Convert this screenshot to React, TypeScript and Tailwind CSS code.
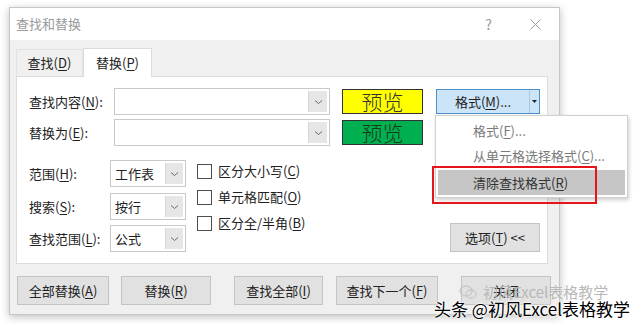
import React from "react";

const font = { fontFamily: '"Noto Sans CJK SC", "Noto Sans", sans-serif' };

function U({ children }: { children: React.ReactNode }) {
  return <span className="underline underline-offset-2 decoration-1">{children}</span>;
}

function Chevron() {
  return (
    <svg width="9" height="6" viewBox="0 0 9 6" className="text-[#6b6b6b]">
      <path d="M1 1.5 L4.5 4.5 L8 1.5" fill="none" stroke="currentColor" strokeWidth="1" />
    </svg>
  );
}

function Combo({ width }: { width: string }) {
  return (
    <div className={`flex h-[27px] ${width} border border-[#c9c9c9] bg-white`}>
      <div className="flex-1" />
      <div className="flex w-[19px] items-center justify-center border-l border-[#d6d6d6] bg-[#e6e6e6] m-[2px] ml-0">
        <Chevron />
      </div>
    </div>
  );
}

function Select({ value }: { value: string }) {
  return (
    <div className="flex h-[27px] w-[76px] border border-[#c9c9c9] bg-white">
      <div className="flex flex-1 items-center pl-[4px] text-[13px] text-[#222]">{value}</div>
      <div className="m-[2px] ml-0 flex w-[18px] items-center justify-center border-l border-[#d6d6d6] bg-[#e6e6e6]">
        <Chevron />
      </div>
    </div>
  );
}

function Check({ children }: { children: React.ReactNode }) {
  return (
    <div className="flex h-[26px] items-center gap-[6px] text-[13px] text-[#222]">
      <div className="h-[15px] w-[15px] border border-[#4d4d4d] bg-white" />
      <span>{children}</span>
    </div>
  );
}

function Btn({ w, children }: { w: string; children: React.ReactNode }) {
  return (
    <div
      className={`flex h-[29px] ${w} items-center justify-center border border-[#c4c4c4] bg-[#e1e1e1] text-[13px] text-[#222]`}
    >
      {children}
    </div>
  );
}

export default function App() {
  return (
    <div className="relative h-[324px] w-[640px] overflow-hidden bg-white pl-[9px] pt-[7px]" style={font}>
      <div className="flex h-[308px] w-[551px] flex-col border border-[#c6c6c6] shadow-[0_2px_8px_rgba(0,0,0,0.25)]">
        <div className="flex h-[32px] items-center justify-between bg-white pl-[6px] pr-[18px]">
          <span className="text-[13px] text-[#9a9a9a]">查找和替换</span>
          <div className="flex items-center gap-[38px]">
            <span className="text-[14px] text-[#9a9a9a]">?</span>
            <svg width="11" height="11" viewBox="0 0 11 11">
              <path d="M0.5 0.5 L10.5 10.5 M10.5 0.5 L0.5 10.5" stroke="#9a9a9a" strokeWidth="1" />
            </svg>
          </div>
        </div>
        <div className="flex flex-1 flex-col bg-[#f0f0f0] px-[6px] pt-[8px]">
          <div className="flex h-[28px] items-end">
            <div className="flex h-[27px] w-[67px] items-center justify-center border border-b-0 border-[#e3e3e3] bg-[#f0f0f0] text-[13px] text-[#222]">
              查找(<U>D</U>)
            </div>
            <div className="relative z-10 -mb-px flex h-[29px] w-[69px] items-center justify-center border border-b-0 border-[#dcdcdc] bg-white text-[13px] text-[#222]">
              替换(<U>P</U>)
            </div>
          </div>
          <div className="flex h-[188px] w-[532px] flex-col border border-[#dcdcdc] bg-white pl-[12px] pt-[11px]">
            <div className="flex h-[27px] items-center">
              <span className="w-[85px] text-[13px] text-[#222]">
                查找内容(<U>N</U>):
              </span>
              <Combo width="w-[216px]" />
              <div className="ml-[12px] flex h-[25px] w-[81px] items-center justify-center border border-[#333] bg-[#ffff00] text-[21px] leading-none text-[#333] font-light">
                预览
              </div>
              <div className="ml-[13px] flex h-[25px] w-[104px] border border-[#4d8fc7] bg-[#cce4f7] text-[13px] text-[#222]">
                <div className="flex flex-1 items-center justify-center">
                  格式(<U>M</U>)...
                </div>
                <div className="flex w-[10px] items-center justify-center border-l border-[#a9c8e3]">
                  <svg width="5" height="3" viewBox="0 0 5 3">
                    <path d="M0 0 L5 0 L2.5 3 Z" fill="#222" />
                  </svg>
                </div>
              </div>
            </div>
            <div className="mt-[4px] flex h-[27px] items-center">
              <span className="w-[85px] text-[13px] text-[#222]">
                替换为(<U>E</U>):
              </span>
              <Combo width="w-[216px]" />
              <div className="ml-[12px] flex h-[25px] w-[81px] items-center justify-center border border-[#333] bg-[#00b050] text-[21px] leading-none text-[#1a3a1a] font-light">
                预览
              </div>
            </div>
            <div className="mt-[14px] flex">
              <div className="flex flex-col">
                <div className="flex items-center">
                  <span className="w-[81px] text-[13px] text-[#222]">
                    范围(<U>H</U>):
                  </span>
                  <Select value="工作表" />
                </div>
                <div className="mt-[6px] flex items-center">
                  <span className="w-[81px] text-[13px] text-[#222]">
                    搜索(<U>S</U>):
                  </span>
                  <Select value="按行" />
                </div>
                <div className="mt-[5px] flex items-center">
                  <span className="w-[81px] text-[13px] text-[#222]">
                    查找范围(<U>L</U>):
                  </span>
                  <Select value="公式" />
                </div>
              </div>
              <div className="-mt-[2px] ml-[11px] flex flex-col">
                <Check>
                  区分大小写(<U>C</U>)
                </Check>
                <Check>
                  单元格匹配(<U>O</U>)
                </Check>
                <Check>
                  区分全/半角(<U>B</U>)
                </Check>
              </div>
              <div className="ml-auto mr-[7px] self-end">
                <Btn w="w-[90px]">
                  选项(<U>T</U>)&nbsp;&lt;&lt;
                </Btn>
              </div>
            </div>
          </div>
          <div className="mt-[12px] flex pl-[1px]">
            <Btn w="w-[92px]">
              全部替换(<U>A</U>)
            </Btn>
            <div className="ml-[12px]">
              <Btn w="w-[90px]">
                替换(<U>R</U>)
              </Btn>
            </div>
            <div className="ml-[23px]">
              <Btn w="w-[89px]">
                查找全部(<U>I</U>)
              </Btn>
            </div>
            <div className="ml-[13px]">
              <Btn w="w-[102px]">
                查找下一个(<U>F</U>)
              </Btn>
            </div>
            <div className="ml-[23px]">
              <Btn w="w-[90px]">关闭</Btn>
            </div>
          </div>
        </div>
      </div>

      {/* dropdown menu */}
      <div className="absolute left-[435px] top-[115px] flex h-[83px] w-[193px] flex-col border border-[#d0d0d0] bg-white p-[2px] text-[13px] shadow-[1px_2px_4px_rgba(0,0,0,0.2)]">
        <div className="flex h-[26px] items-center pl-[35px] text-[#7a7a7a]">
          格式(<U>F</U>)...
        </div>
        <div className="flex h-[25px] items-center pl-[35px] text-[#7a7a7a]">
          从单元格选择格式(<U>C</U>)...
        </div>
        <div className="mt-[2px] flex h-[26px] items-center bg-[#c6c6c6] pl-[35px] text-[#333]">
          清除查找格式(<U>R</U>)
        </div>
      </div>
      <div className="absolute left-[432px] top-[166px] h-[38px] w-[165px] border-2 border-[#e8141b]" />

      {/* watermark */}
      <div className="absolute left-[459px] top-[281px] flex items-center gap-[6px] text-[15px] text-[#b8b8b8]">
        <svg width="18" height="14" viewBox="0 0 18 14">
          <ellipse cx="7" cy="6" rx="6" ry="5" fill="none" stroke="#c8c8c8" strokeWidth="1.3" />
          <ellipse cx="12" cy="9" rx="5" ry="4" fill="none" stroke="#c8c8c8" strokeWidth="1.3" />
        </svg>
        <span>初风Excel表格教学</span>
      </div>
      <div className="absolute left-[434px] top-[300px] text-[17px] leading-none text-black [text-shadow:0_0_2px_#fff,0_0_2px_#fff,0_0_3px_#fff]">
        头条 @初风Excel表格教学
      </div>
    </div>
  );
}
